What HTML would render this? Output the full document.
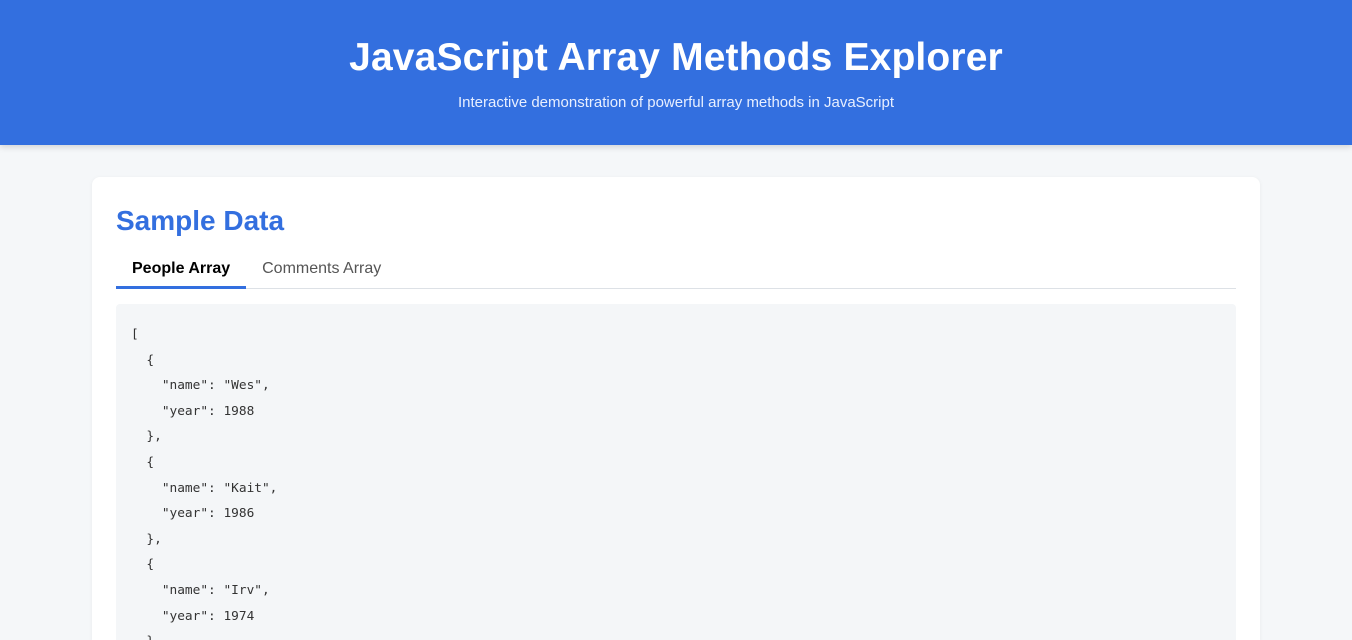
<!DOCTYPE html>
<html style="height:640px;overflow:hidden"><head><style>
*{box-sizing:border-box;margin:0;padding:0}
body{width:1352px;height:640px;overflow:hidden;background:#f5f7f9;font-family:"Liberation Sans",sans-serif;position:relative}
header{height:145px;background:#336fdf;color:#fff;text-align:center;box-shadow:0 2px 6px rgba(0,0,0,.15)}
h1{font-size:39px;font-weight:bold;padding-top:37px;line-height:42px;letter-spacing:0.15px}
header p{font-size:15px;margin-top:15px;color:#e8efff}
.card{position:absolute;left:92px;top:177px;width:1168px;height:463px;overflow:hidden;background:#fff;border-radius:8px 8px 0 0;box-shadow:0 1px 4px rgba(0,0,0,.06);padding:24px}
h2{color:#336fdf;font-size:28px;font-weight:bold;line-height:38px;margin-top:1px}
.tabs{margin-top:12px;height:37px;border-bottom:1px solid #dde1e6;display:flex;font-size:16px}
.tab{padding:8px 16px 0;height:37px;color:#555}
.tab.a{color:#000;font-weight:bold;border-bottom:3px solid #336fdf}
pre{margin-top:15px;background:#f4f6f8;border-radius:4px;padding:18px 15px;font-family:"DejaVu Sans Mono",monospace;font-size:12.8px;line-height:25.6px;color:#333;height:400px}
</style></head><body>
<header><h1>JavaScript Array Methods Explorer</h1><p>Interactive demonstration of powerful array methods in JavaScript</p></header>
<div class="card"><h2>Sample Data</h2>
<div class="tabs"><div class="tab a">People Array</div><div class="tab">Comments Array</div></div>
<pre>[
  {
    "name": "Wes",
    "year": 1988
  },
  {
    "name": "Kait",
    "year": 1986
  },
  {
    "name": "Irv",
    "year": 1974
  },</pre></div>
</body></html>
